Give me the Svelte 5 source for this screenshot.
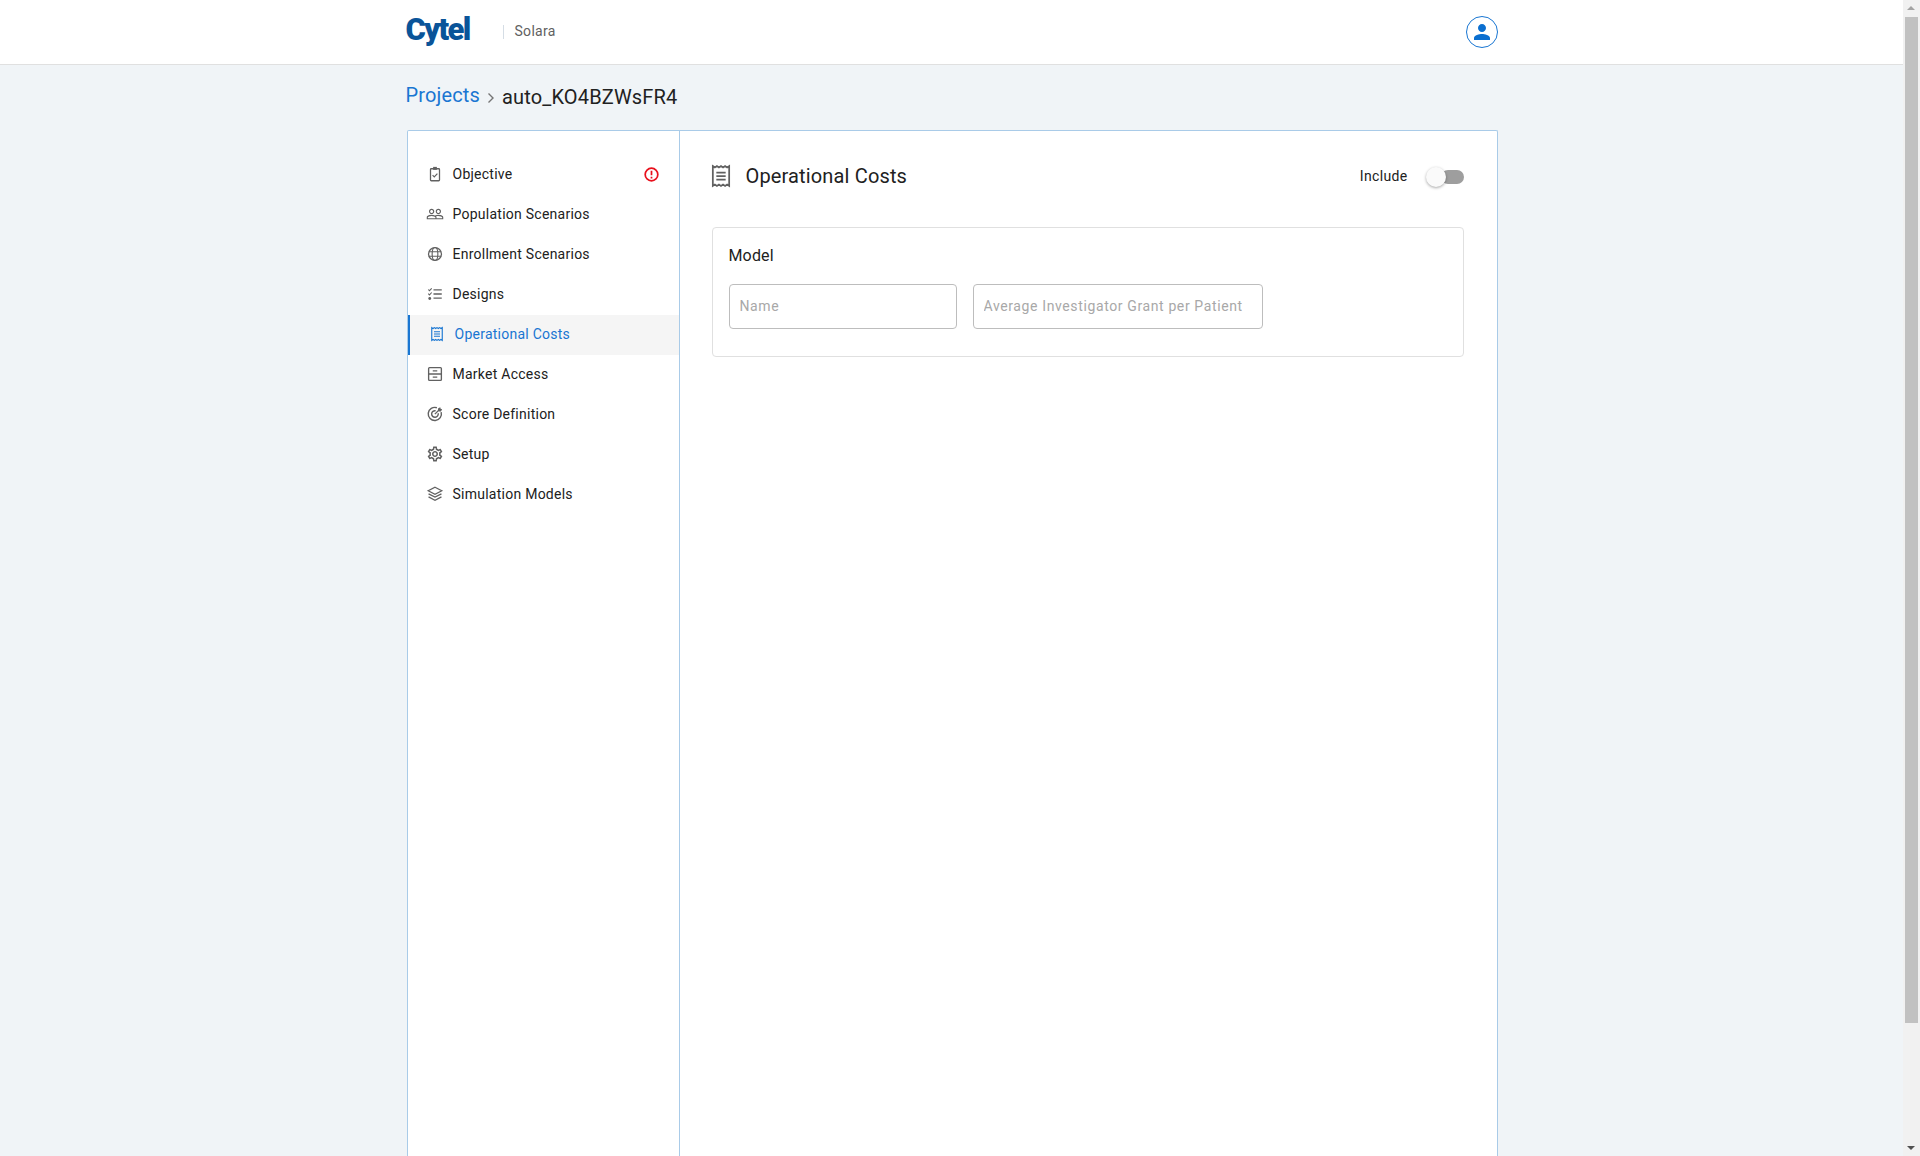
<script>
  const items = [
    { id: 'objective', label: 'Objective', alert: true },
    { id: 'population', label: 'Population Scenarios' },
    { id: 'enrollment', label: 'Enrollment Scenarios' },
    { id: 'designs', label: 'Designs' },
    { id: 'costs', label: 'Operational Costs', active: true },
    { id: 'market', label: 'Market Access' },
    { id: 'score', label: 'Score Definition' },
    { id: 'setup', label: 'Setup' },
    { id: 'models', label: 'Simulation Models' },
  ];
</script>

{#snippet receipt()}
  <path d="M5 3.5l1.75 1.2L8.5 3.5l1.75 1.2L12 3.5l1.75 1.2 1.75-1.2 1.75 1.2L19 3.5v17l-1.75-1.2-1.75 1.2-1.75-1.2L12 20.5l-1.75-1.2-1.75 1.2-1.75-1.2L5 20.5z" fill="none" stroke="currentColor" stroke-width="1.5" />
  <path d="M8 9h8M8 12h8M8 15h8" fill="none" stroke="currentColor" stroke-width="1.5" />
{/snippet}

{#snippet icon(id)}
  <svg class="icon" viewBox="0 0 24 24" aria-hidden="true">
    {#if id === 'objective'}
      <path d="M7 5h10a1 1 0 0 1 1 1v14a1 1 0 0 1-1 1H7a1 1 0 0 1-1-1V6a1 1 0 0 1 1-1z" fill="none" stroke="currentColor" stroke-width="1.7" />
      <path d="M9.5 2.5h5v4h-5z" fill="currentColor" />
      <path d="M8.8 13.6l2.2 2.2 4.2-4.4" fill="none" stroke="currentColor" stroke-width="1.6" />
    {:else if id === 'population'}
      <path fill="currentColor" d="M16.5 13c-1.2 0-3.07.34-4.5 1-1.43-.67-3.3-1-4.5-1C5.33 13 1 14.08 1 16.25V19h22v-2.75c0-2.17-4.33-3.25-6.5-3.25zm-4 4.5h-10v-1.25c0-.54 2.56-1.75 5-1.75s5 1.21 5 1.75v1.25zm9 0H14v-1.25c0-.46-.2-.86-.52-1.22.88-.3 1.96-.53 3.02-.53 2.44 0 5 1.21 5 1.75v1.25zM7.5 12c1.93 0 3.5-1.57 3.5-3.5S9.43 5 7.5 5 4 6.57 4 8.5 5.57 12 7.5 12zm0-5.5c1.1 0 2 .9 2 2s-.9 2-2 2-2-.9-2-2 .9-2 2-2zm9 5.5c1.93 0 3.5-1.57 3.5-3.5S18.43 5 16.5 5 13 6.57 13 8.5s1.57 3.5 3.5 3.5zm0-5.5c1.1 0 2 .9 2 2s-.9 2-2 2-2-.9-2-2 .9-2 2-2z" />
    {:else if id === 'enrollment'}
      <circle cx="12" cy="12" r="8.6" fill="none" stroke="currentColor" stroke-width="1.7" />
      <ellipse cx="12" cy="12" rx="3.8" ry="8.6" fill="none" stroke="currentColor" stroke-width="1.5" />
      <path d="M3.8 9h16.4M3.8 15h16.4" fill="none" stroke="currentColor" stroke-width="1.5" />
    {:else if id === 'designs'}
      <path d="M10 6.5h11M10 12h11M10 17.5h11" fill="none" stroke="currentColor" stroke-width="1.8" />
      <path d="M3 6l1.6 1.6L7.6 4.4M3 11.6l1.6 1.6 3-3.2" fill="none" stroke="currentColor" stroke-width="1.4" />
      <circle cx="5" cy="18" r="1.9" fill="currentColor" />
    {:else if id === 'costs'}
      {@render receipt()}
    {:else if id === 'market'}
      <rect x="3.5" y="3.5" width="17" height="17" rx="1.2" fill="none" stroke="currentColor" stroke-width="1.8" />
      <path d="M3.5 12h17M9 7.8h6M9 16.2h6" fill="none" stroke="currentColor" stroke-width="1.8" />
    {:else if id === 'score'}
      <path d="M20.2 9.5A8.8 8.8 0 1 1 14.5 3.6" fill="none" stroke="currentColor" stroke-width="1.9" />
      <path d="M16.2 11a4.4 4.4 0 1 1-3.4-3.3" fill="none" stroke="currentColor" stroke-width="1.9" />
      <path d="M11.8 12.2L18 6" fill="none" stroke="currentColor" stroke-width="1.7" />
      <path d="M16 4.6l3-1.6.5 2 2 .5-1.6 3h-2.8l-1.1-1.1z" fill="currentColor" />
    {:else if id === 'setup'}
      <path fill="currentColor" d="M19.43 12.98c.04-.32.07-.64.07-.98 0-.34-.03-.66-.07-.98l2.11-1.65c.19-.15.24-.42.12-.64l-2-3.46c-.09-.16-.26-.25-.44-.25-.06 0-.12.01-.17.03l-2.49 1c-.52-.4-1.08-.73-1.69-.98l-.38-2.65C14.46 2.18 14.25 2 14 2h-4c-.25 0-.46.18-.49.42l-.38 2.65c-.61.25-1.17.59-1.69.98l-2.49-1c-.06-.02-.12-.03-.18-.03-.17 0-.34.09-.43.25l-2 3.46c-.13.22-.07.49.12.64l2.11 1.65c-.04.32-.07.65-.07.98 0 .33.03.66.07.98l-2.11 1.65c-.19.15-.24.42-.12.64l2 3.46c.09.16.26.25.44.25.06 0 .12-.01.17-.03l2.49-1c.52.4 1.08.73 1.69.98l.38 2.65c.03.24.24.42.49.42h4c.25 0 .46-.18.49-.42l.38-2.65c.61-.25 1.17-.59 1.69-.98l2.49 1c.06.02.12.03.18.03.17 0 .34-.09.43-.25l2-3.46c.12-.22.07-.49-.12-.64l-2.11-1.65zm-1.98-1.71c.04.31.05.52.05.73 0 .21-.02.43-.05.73l-.14 1.13.89.7 1.08.84-.7 1.21-1.27-.51-1.04-.42-.9.68c-.43.32-.84.56-1.25.73l-1.06.43-.16 1.13-.2 1.35h-1.4l-.19-1.35-.16-1.13-1.06-.43c-.43-.18-.83-.41-1.23-.71l-.91-.7-1.06.43-1.27.51-.7-1.21 1.08-.84.89-.7-.14-1.13c-.03-.31-.05-.54-.05-.74s.02-.43.05-.73l.14-1.13-.89-.7-1.08-.84.7-1.21 1.27.51 1.04.42.9-.68c.43-.32.84-.56 1.25-.73l1.06-.43.16-1.13.2-1.35h1.39l.19 1.35.16 1.13 1.06.43c.43.18.83.41 1.23.71l.91.7 1.06-.43 1.27-.51.7 1.21-1.07.85-.89.7.14 1.13zM12 8c-2.21 0-4 1.79-4 4s1.79 4 4 4 4-1.79 4-4-1.79-4-4-4zm0 6c-1.1 0-2-.9-2-2s.9-2 2-2 2 .9 2 2-.9 2-2 2z" />
    {:else if id === 'models'}
      <path d="M12 3l9 4.7-9 4.7-9-4.7z" fill="none" stroke="currentColor" stroke-width="1.7" />
      <path d="M3.4 11.8l8.6 4.4 8.6-4.4M3.4 15.8l8.6 4.6 8.6-4.6" fill="none" stroke="currentColor" stroke-width="1.7" />
    {/if}
  </svg>
{/snippet}

<div class="app">
  <div class="page">
    <header class="topbar">
      <div class="wrap topbar-inner">
        <span class="logo">Cytel</span>
        <span class="divider"></span>
        <span class="product">Solara</span>
        <button class="avatar" aria-label="Account">
          <svg viewBox="0 0 24 24"><path fill="currentColor" d="M12 12c2.21 0 4-1.79 4-4s-1.79-4-4-4-4 1.79-4 4 1.79 4 4 4zm0 2c-2.67 0-8 1.34-8 4v2h16v-2c0-2.66-5.33-4-8-4z" /></svg>
        </button>
      </div>
    </header>

    <div class="wrap body">
      <nav class="crumbs">
        <a href="#projects" class="crumb-link">Projects</a>
        <svg class="crumb-sep" viewBox="0 0 8 12"><path d="M1.5 1.5L6 6l-4.5 4.5" fill="none" stroke="currentColor" stroke-width="1.4" /></svg>
        <span class="crumb-current">auto_KO4BZWsFR4</span>
      </nav>

      <div class="card">
        <aside class="sidebar">
          {#each items as item}
            <div class="nav-item" class:active={item.active}>
              {@render icon(item.id)}
              <span class="nav-label">{item.label}</span>
              {#if item.alert}
                <svg class="alert" viewBox="0 0 14 14"><circle cx="7" cy="7" r="5.9" fill="none" stroke="currentColor" stroke-width="1.6" /><path d="M7 3.4v4.4M7 9.2v1.5" fill="none" stroke="currentColor" stroke-width="1.6" /></svg>
              {/if}
            </div>
          {/each}
        </aside>

        <main class="content">
          <div class="content-head">
            <svg class="head-icon" viewBox="0 0 24 24">{@render receipt()}</svg>
            <h1>Operational Costs</h1>
            <span class="include">Include</span>
            <span class="toggle"><span class="thumb"></span></span>
          </div>

          <section class="panel">
            <h2>Model</h2>
            <div class="fields">
              <input class="field name" placeholder="Name" />
              <input class="field grant" placeholder="Average Investigator Grant per Patient" />
            </div>
          </section>
        </main>
      </div>
    </div>
  </div>

  <div class="scrollbar">
    <span class="arrow up"></span>
    <div class="track"><div class="bar-thumb"></div></div>
    <span class="arrow down"></span>
  </div>
</div>

<style>
  :global(body) { margin: 0; background: #f0f4f7; font-family: Roboto, "Liberation Sans", sans-serif; }
  .app { display: flex; height: 100vh; overflow: hidden; }
  .page { flex: 1; min-width: 0; display: flex; flex-direction: column; }
  .wrap { width: 1092px; margin: 0 auto; }

  .topbar { background: #fff; border-bottom: 1px solid #e0e0e0; height: 64px; flex-shrink: 0; }
  .topbar-inner { display: flex; align-items: center; height: 100%; }
  .logo { font-size: 31px; font-weight: 900; color: #0a5499; letter-spacing: -1.7px; width: 97px; line-height: 1; margin-top: -6px; }
  .divider { width: 1px; height: 14px; background: #d5dde5; }
  .product { margin-left: 11px; font-size: 14px; color: #616161; letter-spacing: 0.3px; margin-top: -2px; }
  .avatar { margin-left: auto; width: 32px; height: 32px; padding: 3px; border: 1px solid #1976d2; border-radius: 50%; background: #fff; color: #0b6fd0; display: flex; }
  .avatar svg { width: 24px; height: 24px; }

  .body { flex: 1; min-height: 0; display: flex; flex-direction: column; }
  .crumbs { display: flex; align-items: center; height: 65px; flex-shrink: 0; font-size: 20px; letter-spacing: 0.15px; }
  .crumb-link { color: #1976d2; text-decoration: none; margin-top: -5px; }
  .crumb-sep { width: 8px; height: 12px; margin: 0 7px; color: #757575; }
  .crumb-current { color: #212121; margin-top: -1px; }

  .card { flex: 1; min-height: 0; display: flex; margin-left: 1px; background: #fff; border: 1px solid #a9cbe8; border-bottom: 0; border-radius: 2px 2px 0 0; }
  .sidebar { width: 271px; flex-shrink: 0; border-right: 1px solid #a9cbe8; padding-top: 24px; }
  .nav-item { display: flex; align-items: center; box-sizing: border-box; height: 40px; padding: 0 0 2px 18px; color: #212121; }
  .nav-item .icon { width: 18px; height: 18px; color: #616161; margin-right: 9px; flex-shrink: 0; }
  .nav-label { font-size: 14px; letter-spacing: 0.25px; }
  .nav-item.active { background: #f5f5f5; border-left: 2px solid #1976d2; color: #1976d2; }
  .nav-item.active .icon { color: #1976d2; }
  .alert { width: 15px; height: 15px; margin-left: auto; margin-right: 20px; color: #e8101c; }

  .content { flex: 1; min-width: 0; padding: 0 33px 0 32px; }
  .content-head { display: flex; align-items: center; height: 89px; color: #212121; }
  .head-icon { width: 28px; height: 28px; color: #616161; margin-left: -5px; margin-right: 11px; }
  h1 { font-size: 20px; font-weight: 400; margin: 0; letter-spacing: 0.15px; flex: 1; }
  .include { font-size: 14px; letter-spacing: 0.35px; margin: 1px 33px 0 0; }
  .toggle { position: relative; width: 23px; height: 14px; border-radius: 7px; background: #9e9e9e; margin-top: 2px; }
  .thumb { position: absolute; left: -15px; top: -3px; width: 20px; height: 20px; border-radius: 50%; background: #fafafa; box-shadow: 0 1px 3px rgba(0, 0, 0, 0.35); }

  .panel { margin-top: 7px; border: 1px solid #e0e0e0; border-radius: 4px; padding: 16px; height: 130px; box-sizing: border-box; }
  h2 { font-size: 16px; font-weight: 400; color: #212121; margin: 0 0 16px; line-height: 24px; letter-spacing: 0.15px; }
  .fields { display: flex; gap: 16px; }
  .field { box-sizing: border-box; height: 45px; border: 1px solid #bdbdbd; border-radius: 4px; padding: 0 10px 1px; font: inherit; font-size: 14px; letter-spacing: 0.62px; background: #fff; outline: none; }
  .field::placeholder { color: #a8a8a8; opacity: 1; }
  .name { width: 228px; }
  .grant { width: 290px; }

  .scrollbar { width: 17px; flex-shrink: 0; display: flex; flex-direction: column; background: #f1f1f1; }
  .track { flex: 1; padding: 0 2px; }
  .bar-thumb { height: 1006px; background: #c1c1c1; }
  .arrow { height: 17px; flex-shrink: 0; position: relative; }
  .arrow::after { content: ''; position: absolute; left: 4px; border-left: 4px solid transparent; border-right: 4px solid transparent; }
  .up::after { top: 6px; border-bottom: 4px solid #a3a3a3; }
  .down::after { top: 7px; border-top: 4px solid #505050; }
</style>
